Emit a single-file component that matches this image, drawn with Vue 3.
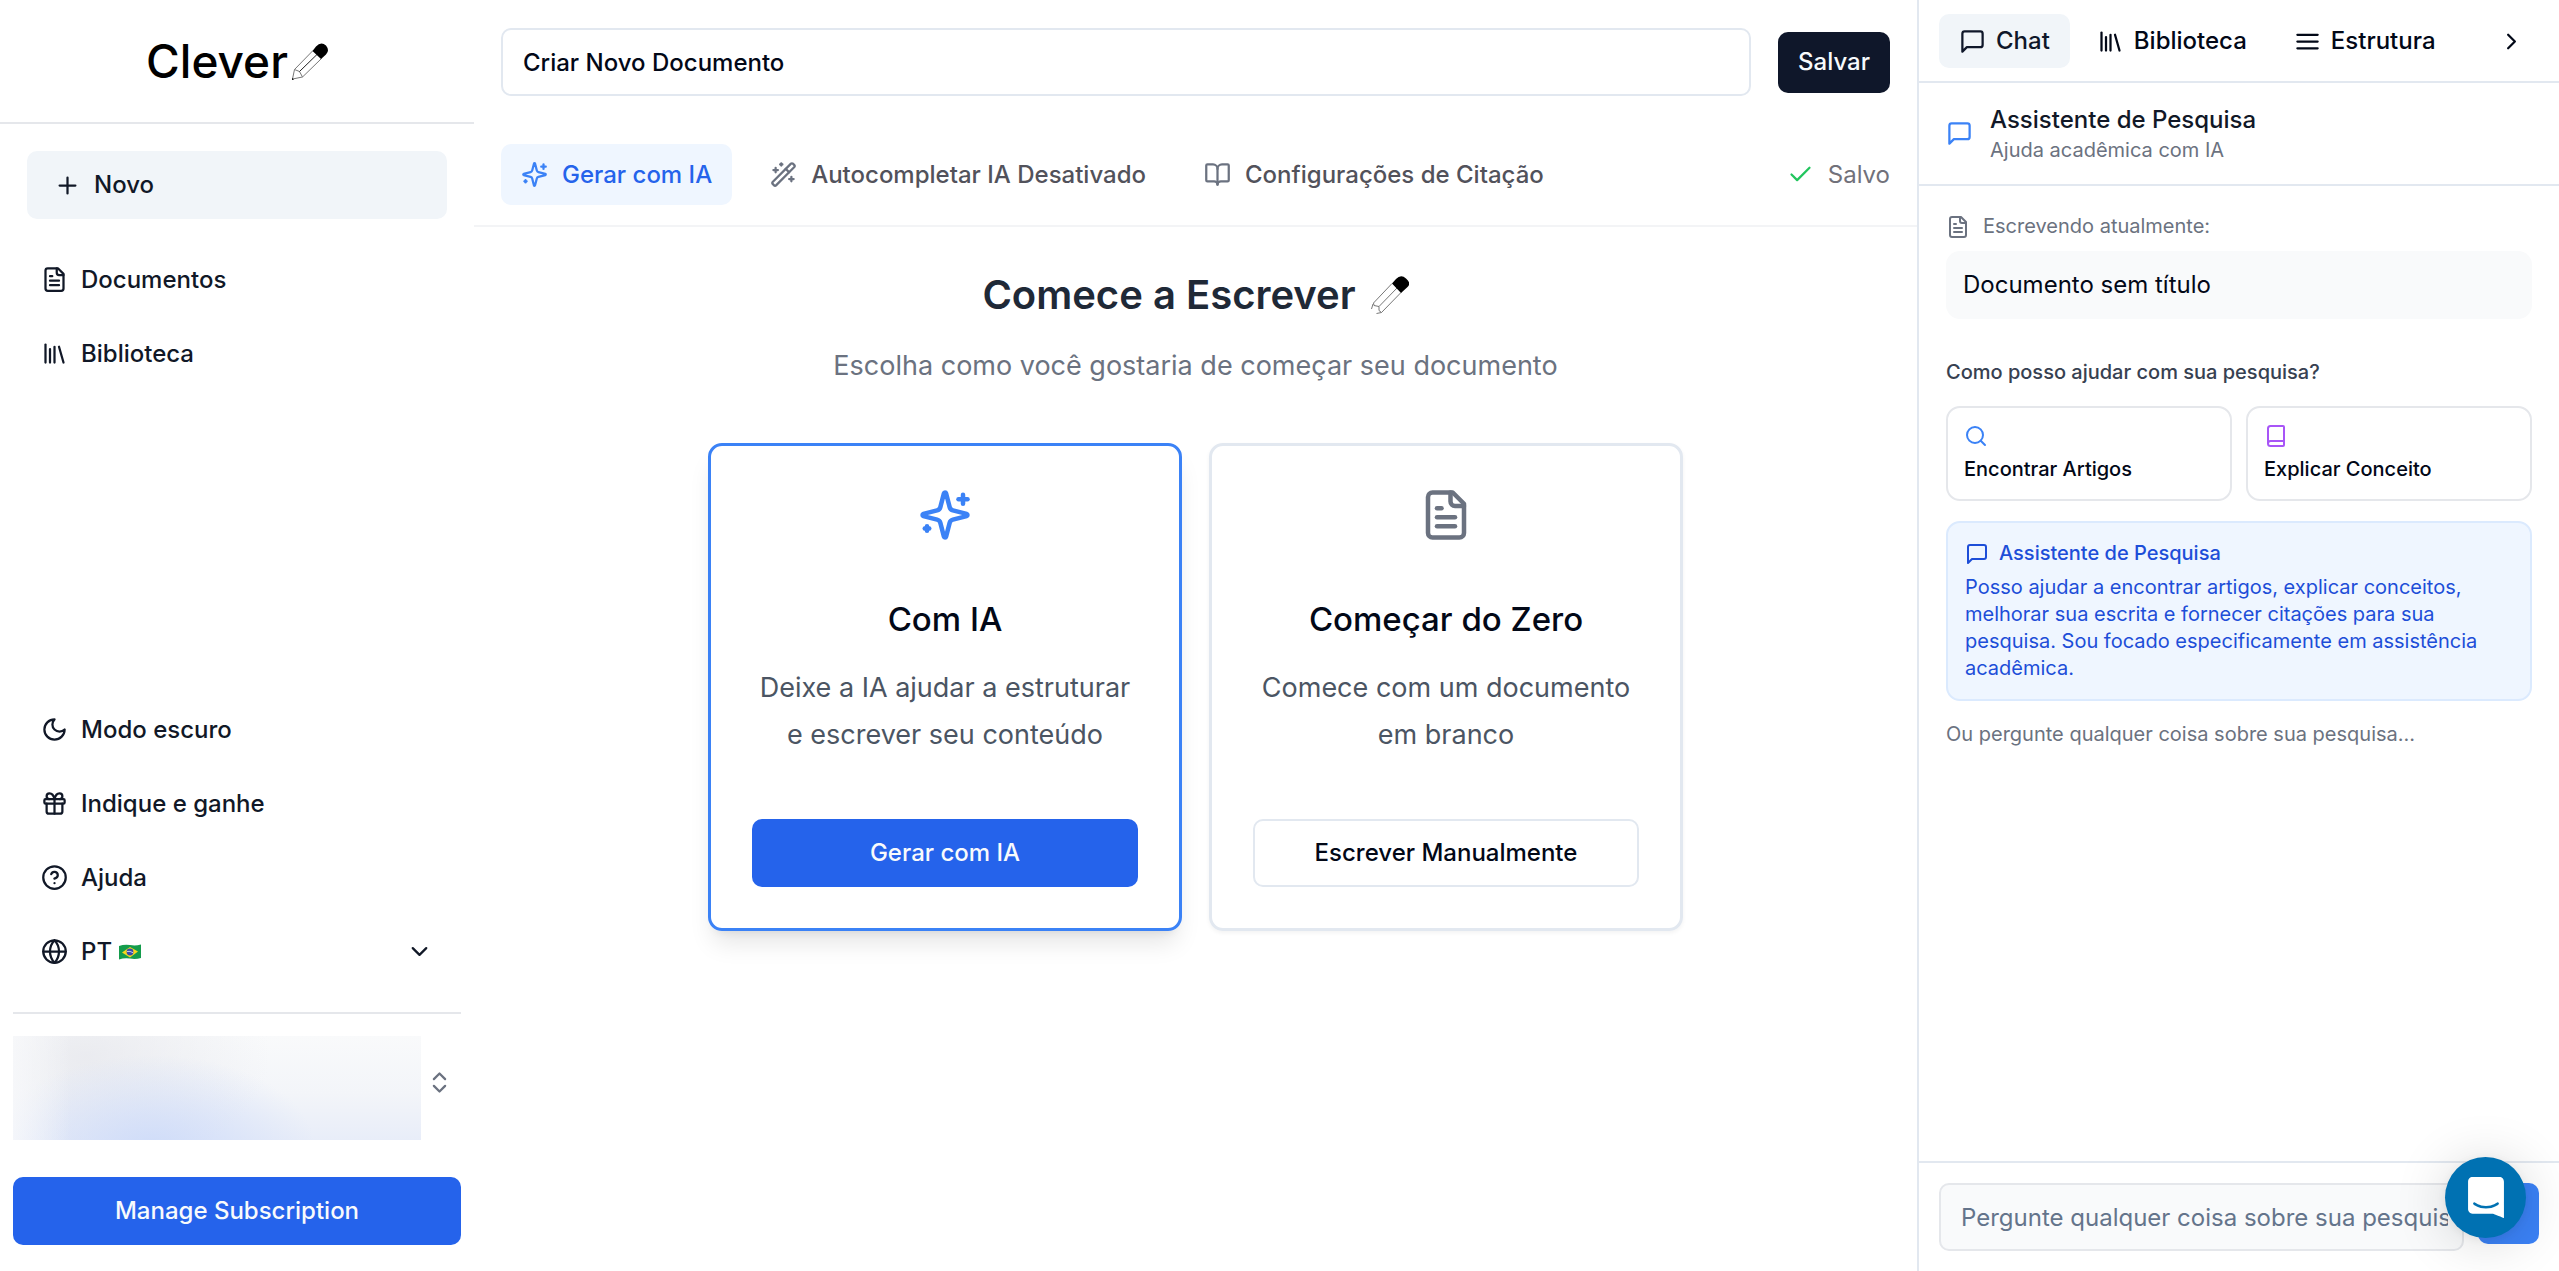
<script setup>
import { h, ref } from 'vue'

const paths = {
  plus: ['M5 12h14', 'M12 5v14'],
  file: ['M15 2H6a2 2 0 0 0-2 2v16a2 2 0 0 0 2 2h12a2 2 0 0 0 2-2V7Z', 'M14 2v4a2 2 0 0 0 2 2h4', 'M10 9H8', 'M16 13H8', 'M16 17H8'],
  library: ['m16 6 4 14', 'M12 6v14', 'M8 8v12', 'M4 4v16'],
  moon: ['M12 3a6 6 0 0 0 9 9 9 9 0 1 1-9-9Z'],
  gift: ['M4 8h16a1 1 0 0 1 1 1v2a1 1 0 0 1-1 1H4a1 1 0 0 1-1-1V9a1 1 0 0 1 1-1Z', 'M12 8v13', 'M19 12v7a2 2 0 0 1-2 2H7a2 2 0 0 1-2-2v-7', 'M7.5 8a2.5 2.5 0 0 1 0-5A4.8 8 0 0 1 12 8a4.8 8 0 0 1 4.5-5 2.5 2.5 0 0 1 0 5'],
  help: ['M2 12a10 10 0 1 0 20 0a10 10 0 1 0-20 0', 'M9.09 9a3 3 0 0 1 5.83 1c0 2-3 3-3 3', 'M12 17h.01'],
  globe: ['M2 12a10 10 0 1 0 20 0a10 10 0 1 0-20 0', 'M12 2a14.5 14.5 0 0 0 0 20 14.5 14.5 0 0 0 0-20', 'M2 12h20'],
  chevronDown: ['m6 9 6 6 6-6'],
  chevronRight: ['m9 18 6-6-6-6'],
  chevrons: ['m7 15 5 5 5-5', 'm7 9 5-5 5 5'],
  sparkles: ['M9.937 15.5A2 2 0 0 0 8.5 14.063l-6.135-1.582a.5.5 0 0 1 0-.962L8.5 9.936A2 2 0 0 0 9.937 8.5l1.582-6.135a.5.5 0 0 1 .963 0L14.063 8.5A2 2 0 0 0 15.5 9.937l6.135 1.581a.5.5 0 0 1 0 .964L15.5 14.063a2 2 0 0 0-1.437 1.437l-1.582 6.135a.5.5 0 0 1-.963 0z', 'M20 3v4', 'M22 5h-4', 'M4 17v2', 'M5 18H3'],
  wand: ['m21.64 3.64-1.28-1.28a1.21 1.21 0 0 0-1.72 0L2.36 18.64a1.21 1.21 0 0 0 0 1.72l1.28 1.28a1.2 1.2 0 0 0 1.72 0L21.64 5.36a1.2 1.2 0 0 0 0-1.72', 'm14 7 3 3', 'M5 6v4', 'M19 14v4', 'M10 2v2', 'M7 8H3', 'M21 16h-4', 'M11 3H9'],
  bookOpen: ['M12 7v14', 'M3 18a1 1 0 0 1-1-1V4a1 1 0 0 1 1-1h5a4 4 0 0 1 4 4 4 4 0 0 1 4-4h5a1 1 0 0 1 1 1v13a1 1 0 0 1-1 1h-6a3 3 0 0 0-3 3 3 3 0 0 0-3-3z'],
  check: ['M20 6 9 17l-5-5'],
  message: ['M21 15a2 2 0 0 1-2 2H7l-4 4V5a2 2 0 0 1 2-2h14a2 2 0 0 1 2 2z'],
  menu: ['M3 6h18', 'M3 12h18', 'M3 18h18'],
  search: ['M3 11a8 8 0 1 0 16 0a8 8 0 1 0-16 0', 'm21 21-4.3-4.3'],
  book: ['M4 19.5v-15A2.5 2.5 0 0 1 6.5 2H19a1 1 0 0 1 1 1v18a1 1 0 0 1-1 1H6.5a1 1 0 0 1 0-5H20'],
  send: ['m22 2-7 20-4-9-9-4Z', 'M22 2 11 13'],
}

const Icon = (props) =>
  h(
    'svg',
    { class: 'icon', viewBox: '0 0 24 24', 'aria-hidden': 'true' },
    paths[props.name].map((d) => h('path', { d })),
  )
Icon.props = ['name']

const title = ref('Criar Novo Documento')
const question = ref('')

const mainNav = [
  { icon: 'file', label: 'Documentos' },
  { icon: 'library', label: 'Biblioteca' },
]
const helpNav = [
  { icon: 'moon', label: 'Modo escuro' },
  { icon: 'gift', label: 'Indique e ganhe' },
  { icon: 'help', label: 'Ajuda' },
]
const tools = [
  { icon: 'sparkles', label: 'Gerar com IA', active: true },
  { icon: 'wand', label: 'Autocompletar IA Desativado' },
  { icon: 'bookOpen', label: 'Configurações de Citação' },
]
const options = [
  { icon: 'sparkles', title: 'Com IA', text: 'Deixe a IA ajudar a estruturar e escrever seu conteúdo', action: 'Gerar com IA', featured: true },
  { icon: 'file', title: 'Começar do Zero', text: 'Comece com um documento em branco', action: 'Escrever Manualmente' },
]
const tabs = [
  { icon: 'message', label: 'Chat', active: true },
  { icon: 'library', label: 'Biblioteca' },
  { icon: 'menu', label: 'Estrutura' },
]
const prompts = [
  { icon: 'search', label: 'Encontrar Artigos', tone: 'blue' },
  { icon: 'book', label: 'Explicar Conceito', tone: 'purple' },
]
</script>

<template>
  <div class="app">
    <aside class="sidebar">
      <div class="brand">
        <span>Clever</span>
        <svg class="brand-pencil" viewBox="0 0 36 37" aria-hidden="true">
          <path class="line" d="M21 7.500 2.500 26.500 7.500 28.500 10.500 34 29.500 15.500M2.500 26.500.500 36l10-2" />
          <path class="core" d="M7.500 28.500 26 10.500" />
          <path d="M0 37v-2l2 1.500zM20.500 8 24 3.500Q29-2 34 2.500 38 7.500 34 11.500L29 16z" />
        </svg>
      </div>

      <nav class="nav">
        <button class="new" type="button"><Icon name="plus" />Novo</button>
        <a v-for="item in mainNav" :key="item.label" class="nav-item" href="#"><Icon :name="item.icon" />{{ item.label }}</a>
      </nav>

      <nav class="nav nav-bottom">
        <a v-for="item in helpNav" :key="item.label" class="nav-item" href="#"><Icon :name="item.icon" />{{ item.label }}</a>
        <button class="nav-item" type="button">
          <Icon name="globe" />
          <span class="lang">PT
            <svg class="flag" viewBox="0 0 22 16" role="img" aria-label="Brasil">
              <path fill="#149c4c" d="M0 2q5.500-2 11-1t11-.500v13.500q-5.500 1.500-11 .500T0 15.500z" />
              <path fill="#f9d71c" d="M3 8.500 11 3l8 4.500-8 6z" />
              <circle cx="11" cy="8" r="3.400" fill="#3a4ba8" />
              <path fill="none" stroke="#e6ebf5" stroke-width=".8" d="M8 7.500q3-.800 6 1.200" />
            </svg>
          </span>
          <Icon class="push" name="chevronDown" />
        </button>
      </nav>

      <div class="account">
        <div class="profile"></div>
        <button class="switcher" type="button" aria-label="Conta"><Icon name="chevrons" /></button>
      </div>
      <button class="primary subscription" type="button">Manage Subscription</button>
    </aside>

    <main class="editor">
      <header class="title-bar">
        <input v-model="title" class="title-input" type="text" aria-label="Título do documento" />
        <button class="save" type="button">Salvar</button>
      </header>
      <div class="toolbar">
        <button v-for="tool in tools" :key="tool.label" class="tool" :class="{ active: tool.active }" type="button">
          <Icon :name="tool.icon" />{{ tool.label }}
        </button>
        <span class="saved"><Icon name="check" />Salvo</span>
      </div>

      <section class="start">
        <h1>
          Comece a Escrever
          <svg class="start-pencil" viewBox="0 0 38 38" aria-hidden="true">
            <path class="line" d="M21 7.500 2.500 27 3 29.500 8 30.500v4l2.500 2L30 16.500M8 30.500 26 12M2 28 .500 33M10.500 36.500l-5 1" />
            <path d="M21 7.500 25 3Q30-2 35 2.500 41 7.500 36 11.500L30 17z" />
          </svg>
        </h1>
        <p class="lead">Escolha como você gostaria de começar seu documento</p>
        <div class="options">
          <article v-for="option in options" :key="option.title" class="option" :class="{ featured: option.featured }">
            <Icon :name="option.icon" />
            <h2>{{ option.title }}</h2>
            <p>{{ option.text }}</p>
            <button :class="option.featured ? 'primary' : 'outline'" type="button">{{ option.action }}</button>
          </article>
        </div>
      </section>
    </main>

    <aside class="panel">
      <div class="tabs">
        <button v-for="tab in tabs" :key="tab.label" class="tab" :class="{ active: tab.active }" type="button">
          <Icon :name="tab.icon" />{{ tab.label }}
        </button>
        <button class="tab push" type="button" aria-label="Recolher"><Icon name="chevronRight" /></button>
      </div>
      <header class="assistant">
        <Icon name="message" />
        <div>
          <h2>Assistente de Pesquisa</h2>
          <p>Ajuda acadêmica com IA</p>
        </div>
      </header>

      <div class="chat">
        <p class="writing"><Icon name="file" />Escrevendo atualmente:</p>
        <p class="document">Documento sem título</p>
        <p class="question">Como posso ajudar com sua pesquisa?</p>
        <div class="prompts">
          <button v-for="prompt in prompts" :key="prompt.label" class="prompt" :class="prompt.tone" type="button">
            <Icon :name="prompt.icon" />{{ prompt.label }}
          </button>
        </div>
        <div class="notice">
          <h3><Icon name="message" />Assistente de Pesquisa</h3>
          <p>Posso ajudar a encontrar artigos, explicar conceitos, melhorar sua escrita e fornecer citações para sua pesquisa. Sou focado especificamente em assistência acadêmica.</p>
        </div>
        <p class="hint">Ou pergunte qualquer coisa sobre sua pesquisa...</p>
      </div>

      <form class="composer" @submit.prevent>
        <input v-model="question" type="text" aria-label="Pergunta" placeholder="Pergunte qualquer coisa sobre sua pesquisa..." />
        <button class="send" type="submit" aria-label="Enviar"><Icon name="send" /></button>
      </form>
      <button class="launcher" type="button" aria-label="Abrir mensagens">
        <svg viewBox="0 0 28 32" aria-hidden="true">
          <path d="M28 32s-4.714-1.855-8.527-3.34H3.437C1.54 28.66 0 27.026 0 25.013V3.644C0 1.633 1.54 0 3.437 0h21.125c1.898 0 3.437 1.632 3.437 3.645v18.404H28V32zm-4.139-11.982a.88.88 0 00-1.292-.105c-.03.026-3.015 2.681-8.57 2.681-5.486 0-8.517-2.636-8.571-2.684a.88.88 0 00-1.29.107 1.01 1.01 0 00-.219.708.992.992 0 00.318.664c.142.128 3.537 3.15 9.762 3.15 6.226 0 9.621-3.022 9.763-3.15a.992.992 0 00.317-.664 1.01 1.01 0 00-.218-.707z" />
        </svg>
      </button>
    </aside>
  </div>
</template>

<style>
body {
  margin: 0;
  background: #fff;
}
</style>

<style scoped>
* {
  box-sizing: border-box;
}
.app {
  display: grid;
  grid-template-columns: 474fr 1443fr 642fr;
  min-height: 100vh;
  color: #020817;
  font: 400 24px/34px Inter, "Liberation Sans", sans-serif;
}
h1, h2, h3, p {
  margin: 0;
}
button, input {
  margin: 0;
  padding: 0;
  border: 0;
  background: none;
  color: inherit;
  font: inherit;
}
button {
  cursor: pointer;
  font-weight: 500;
}
a {
  color: inherit;
  text-decoration: none;
}
.icon {
  flex: none;
  width: 27px;
  height: 27px;
  fill: none;
  stroke: currentColor;
  stroke-width: 2;
  stroke-linecap: round;
  stroke-linejoin: round;
}
.push {
  margin-left: auto;
}
.line, .core {
  fill: none;
  stroke: #777;
  stroke-width: 1;
}
.core {
  stroke: #222;
}

/* Sidebar */
.sidebar {
  display: flex;
  flex-direction: column;
  min-width: 0;
  color: #111827;
}
.brand {
  display: flex;
  align-items: center;
  justify-content: center;
  gap: 4px;
  height: 124px;
  border-bottom: 2px solid #e5e7eb;
  color: #000;
  font-size: 46px;
  font-weight: 500;
  line-height: 60px;
}
.brand-pencil {
  width: 36px;
  height: 37px;
}
.nav {
  display: flex;
  flex-direction: column;
  gap: 13px;
  padding: 27px 27px 0;
}
.nav-bottom {
  margin-top: auto;
}
.new {
  display: flex;
  align-items: center;
  gap: 13px;
  height: 68px;
  margin-bottom: 17px;
  padding: 0 27px;
  border-radius: 10px;
  background: #f1f5f9;
}
.nav-item {
  display: flex;
  align-items: center;
  gap: 13px;
  height: 61px;
  padding: 0 14px;
  font-weight: 500;
}
.lang {
  display: flex;
  align-items: center;
  gap: 7px;
}
.flag {
  width: 22px;
  height: 16px;
}
.account {
  display: flex;
  align-items: flex-start;
  gap: 5px;
  margin: 30px 13px 0;
  padding-top: 22px;
  border-top: 2px solid #e5e7eb;
}
.profile {
  flex: 1;
  height: 104px;
  background:
    linear-gradient(90deg, #f8f9fbcc, #f8f9fb00 14%),
    radial-gradient(ellipse 40% 90% at 34% 108%, #cfdcf9, #cfdcf900),
    radial-gradient(ellipse 45% 110% at 18% 20%, #e7e8edcc, #e7e8ed00),
    linear-gradient(#f9fafb, #f3f5f9 55%, #e8edf9);
}
.switcher {
  display: flex;
  align-items: center;
  height: 92px;
  margin-right: 8px;
  color: #6b7280;
}
.primary {
  height: 68px;
  border-radius: 10px;
  background: #2563eb;
  color: #f8fafc;
}
.subscription {
  margin: 37px 13px 26px;
}

/* Editor */
.editor {
  min-width: 0;
}
.title-bar {
  display: flex;
  align-items: center;
  gap: 27px;
  padding: 28px 27px;
}
.title-input {
  flex: 1;
  min-width: 0;
  height: 68px;
  padding: 0 20px;
  border: 2px solid #e2e8f0;
  border-radius: 10px;
  font-weight: 500;
}
.save {
  height: 61px;
  padding: 0 20px;
  border-radius: 10px;
  background: #0f172a;
  color: #f8fafc;
}
.toolbar {
  display: flex;
  align-items: center;
  gap: 18px;
  padding: 20px 27px;
  border-bottom: 2px solid #f3f4f6;
}
.tool {
  display: flex;
  align-items: center;
  gap: 14px;
  height: 61px;
  padding: 0 20px;
  border-radius: 10px;
  color: #52525b;
}
.tool .icon {
  color: #6b7280;
}
.tool.active {
  background: #eff6ff;
  color: #2563eb;
}
.tool.active .icon {
  color: #3b82f6;
}
.saved {
  display: flex;
  align-items: center;
  gap: 14px;
  margin-left: auto;
  color: #71717a;
}
.saved .icon {
  color: #22c55e;
}
.start {
  display: flex;
  flex-direction: column;
  align-items: center;
  padding: 38px 27px;
  text-align: center;
}
h1 {
  display: flex;
  align-items: center;
  gap: 15px;
  color: #1f2937;
  font-size: 40px;
  font-weight: 600;
  line-height: 60px;
}
.start-pencil {
  width: 38px;
  height: 38px;
}
.lead {
  margin-top: 17px;
  color: #6b7280;
  font-size: 27px;
  line-height: 48px;
}
.options {
  display: grid;
  grid-template-columns: 1fr 1fr;
  gap: 27px;
  width: 100%;
  max-width: 975px;
  margin-top: 53px;
}
.option {
  display: flex;
  flex-direction: column;
  align-items: center;
  padding: 42px 41px 41px;
  border: 3px solid #e2e8f0;
  border-radius: 14px;
  box-shadow: 0 2px 4px #0000000d;
}
.option.featured {
  border-color: #3b82f6;
  box-shadow: 0 17px 25px -5px #0000001a, 0 7px 10px -7px #0000001a;
}
.option .icon {
  width: 54px;
  height: 54px;
  color: #6b7280;
}
.option.featured .icon {
  color: #3b82f6;
}
.option h2 {
  margin-top: 53px;
  font-size: 33px;
  font-weight: 500;
  line-height: 48px;
}
.option p {
  margin: 21px 0 61px;
  color: #4b5563;
  font-size: 27px;
  line-height: 47px;
}
.option button {
  width: 100%;
  height: 68px;
}
.outline {
  border: 2px solid #e2e8f0;
  border-radius: 10px;
}

/* Research panel */
.panel {
  position: relative;
  display: flex;
  flex-direction: column;
  min-width: 0;
  border-left: 2px solid #e2e8f0;
}
.tabs {
  display: flex;
  gap: 7px;
  padding: 14px 20px 13px;
  border-bottom: 2px solid #e2e8f0;
}
.tab {
  display: flex;
  align-items: center;
  gap: 10px;
  height: 54px;
  padding: 0 20px;
  border-radius: 10px;
}
.tab.push {
  padding: 0 14px;
}
.tab.active {
  background: #f1f5f9;
  color: #0f172a;
}
.assistant {
  display: flex;
  align-items: center;
  gap: 17px;
  padding: 20px 27px;
  border-bottom: 2px solid #e2e8f0;
}
.assistant .icon {
  color: #3b82f6;
}
.assistant h2 {
  color: #111827;
  font-size: 24px;
  font-weight: 500;
  line-height: 34px;
}
.assistant p {
  color: #6b7280;
  font-size: 20px;
  line-height: 27px;
}
.chat {
  flex: 1;
  padding: 27px;
  font-size: 20px;
  line-height: 27px;
}
.chat .icon {
  width: 24px;
  height: 24px;
}
.writing {
  display: flex;
  align-items: center;
  gap: 13px;
  color: #6b7280;
}
.document {
  margin-top: 11px;
  padding: 17px;
  border-radius: 14px;
  background: #f9fafb;
  font-size: 24px;
  line-height: 34px;
}
.question {
  margin: 36px 0 17px;
  color: #374151;
  font-weight: 500;
  line-height: 34px;
}
.prompts {
  display: grid;
  grid-template-columns: 1fr 1fr;
  gap: 14px;
}
.prompt {
  display: flex;
  flex-direction: column;
  gap: 8px;
  padding: 16px;
  border: 2px solid #e5e7eb;
  border-radius: 14px;
  text-align: left;
}
.prompt.blue .icon {
  color: #3b82f6;
}
.prompt.purple .icon {
  color: #a855f7;
}
.notice {
  margin: 20px 0;
  padding: 17px;
  border: 2px solid #dbeafe;
  border-radius: 14px;
  background: #eff6ff;
  color: #1d4ed8;
}
.notice h3 {
  display: flex;
  align-items: center;
  gap: 10px;
  margin-bottom: 7px;
  font-size: 20px;
  font-weight: 500;
}
.hint {
  color: #6b7280;
}
.composer {
  display: flex;
  align-items: flex-start;
  gap: 14px;
  padding: 20px;
  border-top: 2px solid #e2e8f0;
}
.composer input {
  flex: 1;
  min-width: 0;
  height: 68px;
  padding: 0 14px 0 20px;
  border: 2px solid #e5e7eb;
  border-radius: 10px;
  background: #f9fafb;
}
.composer input::placeholder {
  color: #64748b;
  opacity: 1;
}
.send {
  display: grid;
  place-items: center;
  width: 61px;
  height: 61px;
  border-radius: 10px;
  background: #3b82f6;
  color: #fff;
}
.launcher {
  position: absolute;
  right: 33px;
  bottom: 33px;
  display: grid;
  place-items: center;
  width: 81px;
  height: 81px;
  border-radius: 50%;
  background: #0071b2;
  box-shadow: 0 2px 10px #0000000f, 0 4px 54px #00000029;
}
.launcher svg {
  width: 36px;
  height: 41px;
  fill: #fff;
}
</style>
